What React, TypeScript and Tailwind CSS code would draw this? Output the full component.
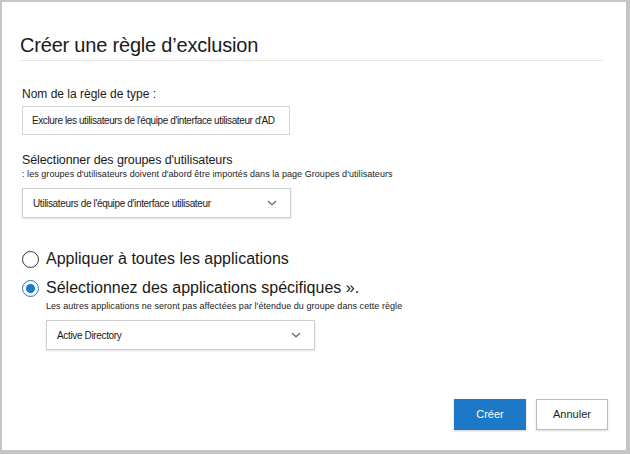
import React, { useState } from "react";

const Chevron = () => (
  <svg width="10" height="6" viewBox="0 0 10 6" className="text-[#707070]">
    <path d="M1 1 L5 4.8 L9 1" fill="none" stroke="currentColor" strokeWidth="1.3" />
  </svg>
);

const Radio = ({ checked, onClick }: { checked: boolean; onClick: () => void }) => (
  <button
    onClick={onClick}
    className={
      "w-[17px] h-[17px] rounded-full border flex items-center justify-center shrink-0 " +
      (checked ? "border-[#1e78c8]" : "border-[#333]")
    }
  >
    {checked && <span className="w-[9px] h-[9px] rounded-full bg-[#1e78c8]" />}
  </button>
);

const App = () => {
  const [mode, setMode] = useState("specific");
  return (
    <div
      className="w-[630px] h-[454px] bg-white border-t-2 border-l-2 border-r-4 border-b-4 border-[#c6c6c6] text-[#1a1a1a] flex flex-col"
      style={{ fontFamily: "'Liberation Sans', Arial, sans-serif" }}
    >
      <div className="px-[18px] pt-[31px]">
        <h1 className="text-[20px] leading-[24px] tracking-[-0.2px] pb-[3px] border-b border-[#e8e8e8] mr-[5px]">
          Créer une règle d’exclusion
        </h1>
      </div>

      <div className="px-[20px] pt-[25px] flex flex-col">
        <label className="text-[12px] leading-[16px]">Nom de la règle de type :</label>
        <div className="mt-[4px] w-[268px] h-[29px] border border-[#d4d4d4] flex items-center px-[9px] text-[10px] tracking-[-0.4px] whitespace-nowrap">
          Exclure les utilisateurs de l'équipe d'interface utilisateur d'AD
        </div>

        <label className="mt-[17px] text-[12.5px] leading-[16px] tracking-[-0.1px]">
          Sélectionner des groupes d'utilisateurs
        </label>
        <div className="text-[9px] leading-[12px] tracking-[0.05px]">
          : les groupes d'utilisateurs doivent d'abord être importés dans la page Groupes d'utilisateurs
        </div>
        <div className="mt-[8px] w-[269px] h-[30px] border border-[#d0d0d0] shadow-[0_1px_2px_rgba(0,0,0,0.12)] flex items-center justify-between pl-[10px] pr-[13px] text-[10px] tracking-[-0.35px]">
          <span>Utilisateurs de l'équipe d'interface utilisateur</span>
          <Chevron />
        </div>

        <div className="mt-[30px] flex items-center gap-[7px]">
          <Radio checked={mode === "all"} onClick={() => setMode("all")} />
          <span className="text-[16px] leading-[22px]">Appliquer à toutes les applications</span>
        </div>
        <div className="mt-[7px] flex items-center gap-[7px]">
          <Radio checked={mode === "specific"} onClick={() => setMode("specific")} />
          <span className="text-[16px] leading-[22px]">Sélectionnez des applications spécifiques ».</span>
        </div>
        <div className="pl-[24px] flex flex-col">
          <div className="mt-[1px] text-[9px] leading-[12px] tracking-[0.05px]">
            Les autres applications ne seront pas affectées par l'étendue du groupe dans cette règle
          </div>
          <div className="mt-[8px] w-[269px] h-[30px] border border-[#d0d0d0] shadow-[0_1px_2px_rgba(0,0,0,0.12)] flex items-center justify-between pl-[10px] pr-[13px] text-[10px] tracking-[-0.35px]">
            <span>Active Directory</span>
            <Chevron />
          </div>
        </div>
      </div>

      <div className="mt-auto mb-[20px] mr-[18px] flex justify-end gap-[10px]">
        <button className="w-[72px] h-[31px] bg-[#1e78c8] text-white text-[11px] shadow-[0_1px_2px_rgba(0,0,0,0.2)]">
          Créer
        </button>
        <button className="w-[72px] h-[31px] bg-white border border-[#bcbcbc] text-[11px] shadow-[0_1px_2px_rgba(0,0,0,0.15)]">
          Annuler
        </button>
      </div>
    </div>
  );
};

export default App;
